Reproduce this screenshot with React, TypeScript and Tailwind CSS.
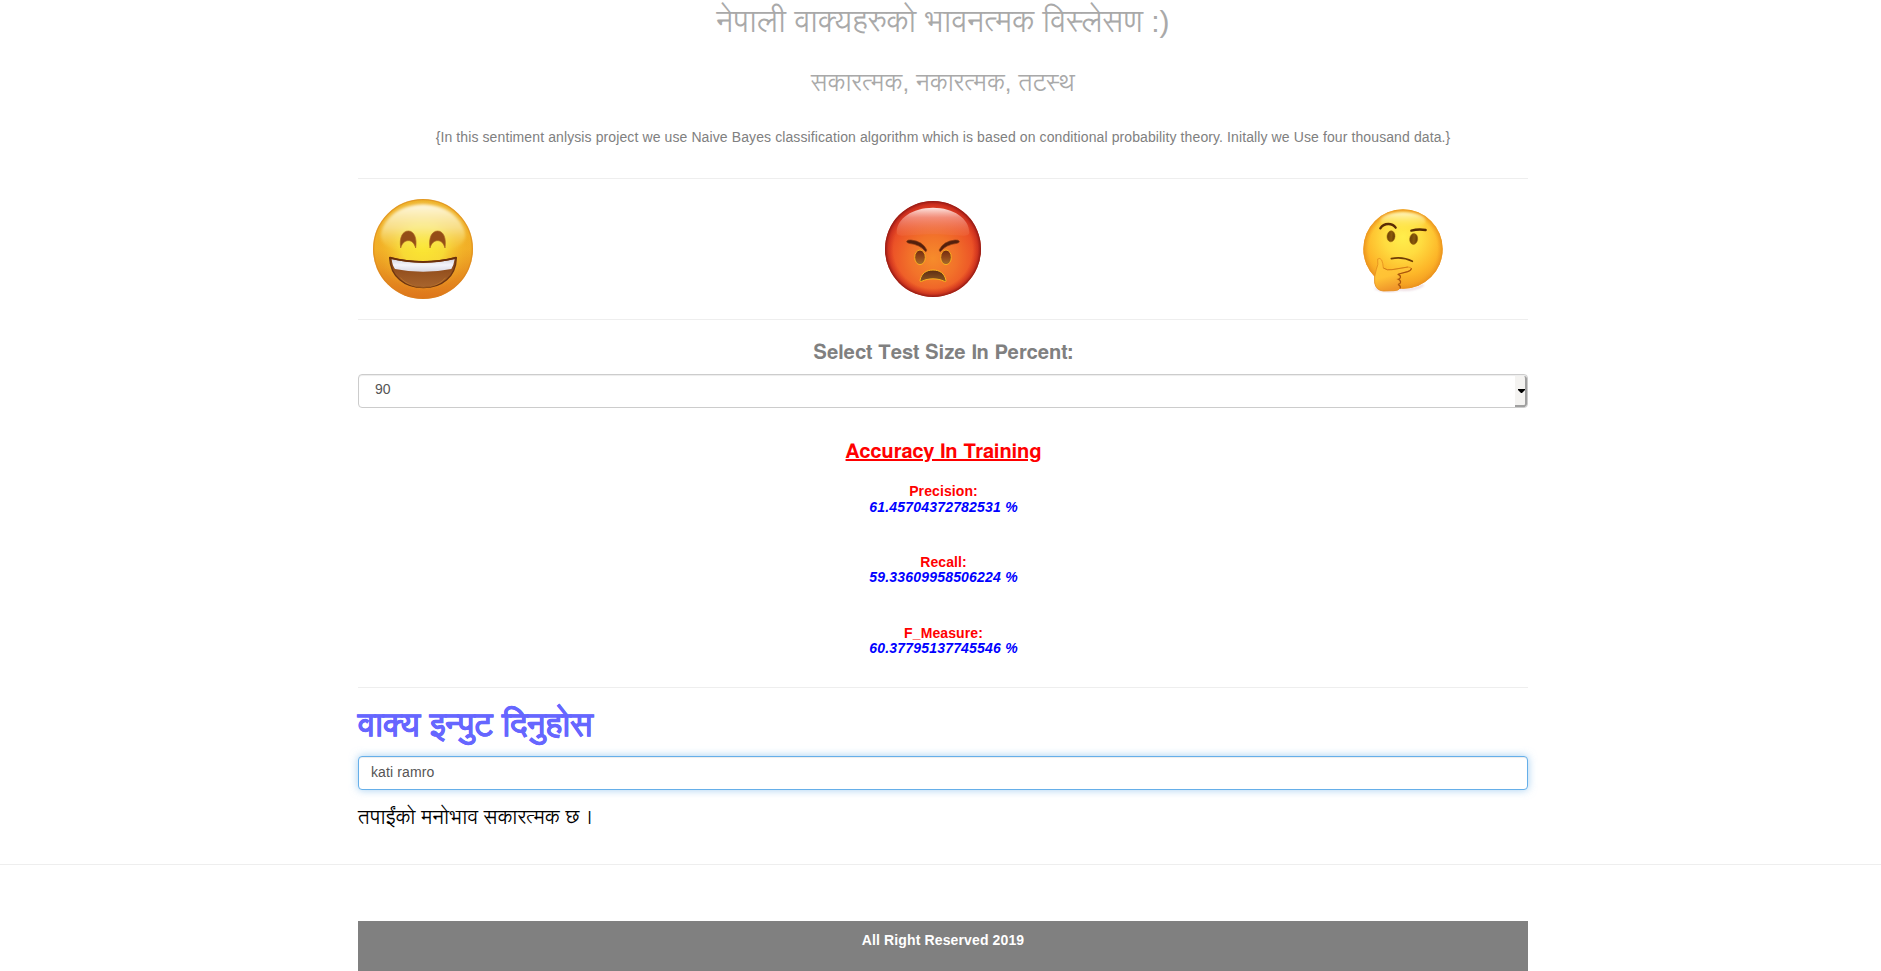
const metrics = [
  { label: 'Precision:', value: '61.45704372782531 %', leading: 'leading-[16px]' },
  { label: 'Recall:', value: '59.33609958506224 %', leading: 'leading-[14px]' },
  { label: 'F_Measure:', value: '60.37795137745546 %', leading: 'leading-[14px]' },
];

function HappyFace() {
  return (
    <svg className="mt-[19px] ml-[14px] h-[102px] w-[102px] shrink-0" viewBox="66 54 306 306">
      <defs>
        <linearGradient id="happy-base" x1="0" y1="0" x2="0" y2="1">
          <stop offset="0" stopColor="#eeb52b" />
          <stop offset="0.5" stopColor="#f1ae26" />
          <stop offset="1" stopColor="#dd741b" />
        </linearGradient>
        <radialGradient id="happy-glow" cx="0.5" cy="0.5" r="0.5">
          <stop offset="0" stopColor="#fbe832" />
          <stop offset="0.45" stopColor="#f8dc36" stopOpacity="0.95" />
          <stop offset="1" stopColor="#f3ad28" stopOpacity="0" />
        </radialGradient>
        <linearGradient id="happy-shine" x1="0" y1="0" x2="0" y2="1">
          <stop offset="0" stopColor="#fffbe8" stopOpacity="0.95" />
          <stop offset="0.5" stopColor="#fbf2b5" stopOpacity="0.65" />
          <stop offset="1" stopColor="#f8e14a" stopOpacity="0" />
        </linearGradient>
        <linearGradient id="happy-mouth" x1="0" y1="0" x2="0" y2="1">
          <stop offset="0" stopColor="#7a3b10" />
          <stop offset="0.5" stopColor="#975320" />
          <stop offset="1" stopColor="#a8652e" />
        </linearGradient>
        <linearGradient id="happy-teeth" x1="0" y1="0" x2="0" y2="1">
          <stop offset="0" stopColor="#d6d6de" />
          <stop offset="0.45" stopColor="#f4f4fb" />
          <stop offset="1" stopColor="#d9d8e2" />
        </linearGradient>
        <filter id="happy-soft"><feGaussianBlur stdDeviation="4" /></filter>
      </defs>
      <circle cx="219" cy="207" r="150" fill="url(#happy-base)" />
      <circle cx="219" cy="207" r="148" fill="none" stroke="#d9821e" strokeWidth="4" opacity="0.55" />
      <ellipse cx="219" cy="196" rx="146" ry="138" fill="url(#happy-glow)" />
      <path d="M219 73C150 73 98 115 92 165C92 205 150 218 219 218C288 218 346 205 346 165C340 115 288 73 219 73Z" fill="url(#happy-shine)" filter="url(#happy-soft)" />
      <path d="M152 204C147 172 158 153 175 153C192 153 202 174 197 204C193 190 186 182 175 182C164 182 156 190 152 204Z" fill="#944d17" stroke="#ad6821" strokeWidth="2" />
      <path d="M240 204C235 172 246 153 263 153C280 153 290 174 285 204C281 190 274 182 263 182C252 182 244 190 240 204Z" fill="#944d17" stroke="#ad6821" strokeWidth="2" />
      <path d="M119 233Q219 257 319 233C318 290 276 323 220 323C164 323 121 290 119 233Z" fill="url(#happy-mouth)" stroke="#6e3510" strokeWidth="4" strokeLinejoin="round" />
      <path d="M125 238Q219 260 314 238Q311 257 304 267Q219 284 135 267Q127 257 125 238Z" fill="url(#happy-teeth)" />
      <path d="M120 233Q219 259 318 233" fill="none" stroke="#6b2e0b" strokeWidth="5" strokeLinecap="round" />
      <path d="M151 293C187 332 253 332 287 293" fill="none" stroke="#e9982c" strokeWidth="2" opacity="0.5" />
    </svg>
  );
}

function AngryFace() {
  return (
    <svg className="mt-[21px] ml-[410px] h-[98px] w-[98px] shrink-0" viewBox="72 60 294 294">
      <defs>
        <radialGradient id="angry-base" cx="0.5" cy="0.6" r="0.6">
          <stop offset="0" stopColor="#f68c2b" />
          <stop offset="0.4" stopColor="#f2722a" />
          <stop offset="0.7" stopColor="#ec5427" />
          <stop offset="1" stopColor="#d83421" />
        </radialGradient>
        <radialGradient id="angry-edge" cx="0.5" cy="0.5" r="0.5">
          <stop offset="0.82" stopColor="#d02c1c" stopOpacity="0" />
          <stop offset="0.93" stopColor="#c0261b" stopOpacity="0.6" />
          <stop offset="1" stopColor="#8e1813" />
        </radialGradient>
        <linearGradient id="angry-shine" x1="0" y1="0" x2="0" y2="1">
          <stop offset="0" stopColor="#fff1ee" stopOpacity="0.95" />
          <stop offset="0.35" stopColor="#f6a598" stopOpacity="0.72" />
          <stop offset="1" stopColor="#f27a50" stopOpacity="0.25" />
        </linearGradient>
        <linearGradient id="angry-eye" x1="0" y1="0" x2="0" y2="1">
          <stop offset="0" stopColor="#71290f" />
          <stop offset="0.5" stopColor="#914719" />
          <stop offset="1" stopColor="#a86f2b" />
        </linearGradient>
        <linearGradient id="angry-mouth" x1="0" y1="0" x2="0" y2="1">
          <stop offset="0" stopColor="#5c2c12" />
          <stop offset="1" stopColor="#8b5822" />
        </linearGradient>
      </defs>
      <circle cx="219" cy="207" r="144" fill="url(#angry-base)" />
      <circle cx="219" cy="207" r="144" fill="url(#angry-edge)" />
      <path d="M219 83C158 83 110 116 110 157C111 175 140 164 219 163C298 164 327 175 328 157C328 116 280 83 219 83Z" fill="url(#angry-shine)" />
      <path d="M140 184Q143 179 153 180Q188 184 200 209Q201 214 197 215Q181 194 147 190Q139 188 140 184Z" fill="#54200d" stroke="#8a3a12" strokeWidth="2" />
      <path d="M298 184Q295 179 285 180Q250 184 238 209Q237 214 241 215Q257 194 291 190Q299 188 298 184Z" fill="#54200d" stroke="#8a3a12" strokeWidth="2" />
      <ellipse cx="180" cy="232" rx="16" ry="22" fill="url(#angry-eye)" stroke="#faae21" strokeWidth="3" />
      <ellipse cx="258" cy="232" rx="16" ry="22" fill="url(#angry-eye)" stroke="#faae21" strokeWidth="3" />
      <path d="M180 301C184 280 199 270 219 270C239 270 254 280 258 301Q258 307 253 304C233 294 205 294 185 304Q180 307 180 301Z" fill="url(#angry-mouth)" stroke="#fab51e" strokeWidth="3" />
    </svg>
  );
}

function ThinkingFace() {
  return (
    <svg className="mt-[29px] ml-[380px] h-[86px] w-[82px] shrink-0" viewBox="66 84 246 258">
      <defs>
        <radialGradient id="think-base" cx="0.5" cy="0.35" r="0.68">
          <stop offset="0" stopColor="#ffee4c" />
          <stop offset="0.35" stopColor="#ffdc40" />
          <stop offset="0.7" stopColor="#fdb729" />
          <stop offset="1" stopColor="#f0931e" />
        </radialGradient>
        <radialGradient id="think-edge" cx="0.5" cy="0.5" r="0.5">
          <stop offset="0.86" stopColor="#f5a623" stopOpacity="0" />
          <stop offset="1" stopColor="#e88e1c" stopOpacity="0.9" />
        </radialGradient>
        <linearGradient id="think-shine" x1="0" y1="0" x2="0" y2="1">
          <stop offset="0" stopColor="#fffde0" stopOpacity="0.85" />
          <stop offset="1" stopColor="#fff25a" stopOpacity="0" />
        </linearGradient>
        <linearGradient id="think-hand" x1="0" y1="0" x2="0.3" y2="1">
          <stop offset="0" stopColor="#ffc739" />
          <stop offset="0.6" stopColor="#ffc235" />
          <stop offset="1" stopColor="#f0962a" />
        </linearGradient>
        <linearGradient id="think-eye" x1="0" y1="0" x2="1" y2="0">
          <stop offset="0" stopColor="#6b3f05" />
          <stop offset="0.55" stopColor="#8a5a0b" />
          <stop offset="1" stopColor="#643a04" />
        </linearGradient>
        <filter id="think-shadow" x="-20%" y="-20%" width="140%" height="140%">
          <feGaussianBlur stdDeviation="3" />
        </filter>
      </defs>
      <path d="M106 325Q140 342 181 328Q220 333 250 315" fill="none" stroke="#c9a0b0" strokeWidth="5" opacity="0.5" filter="url(#think-shadow)" />
      <circle cx="189" cy="207" r="119" fill="url(#think-base)" />
      <circle cx="189" cy="207" r="119" fill="url(#think-edge)" />
      <ellipse cx="189" cy="122" rx="68" ry="25" fill="url(#think-shine)" filter="url(#think-shadow)" />
      <path d="M121 145Q129 132 145 132Q159 132 167 143" fill="none" stroke="#5a2c04" strokeWidth="7" strokeLinecap="round" />
      <path d="M214 152Q235 146 257 150" fill="none" stroke="#5a2c04" strokeWidth="7" strokeLinecap="round" />
      <ellipse cx="153" cy="169" rx="12" ry="16.5" fill="url(#think-eye)" stroke="#97600c" strokeWidth="1.5" transform="rotate(5 153 169)" />
      <ellipse cx="221" cy="177" rx="12" ry="16.5" fill="url(#think-eye)" stroke="#97600c" strokeWidth="1.5" transform="rotate(5 221 177)" />
      <path d="M154 236Q188 229 217 244" fill="none" stroke="#6f3d06" strokeWidth="5" strokeLinecap="round" />
      <path d="M113 237Q120 232 125 240Q129 250 130 264Q141 272 156 269L204 261Q214 261 214 267Q213 272 203 275L175 283Q183 286 182 292Q180 297 175 298Q183 302 181 308Q179 313 174 313Q183 316 181 323Q177 332 162 332L130 333Q108 331 104 309Q101 292 109 268Q116 254 113 237Z" fill="url(#think-hand)" stroke="#e58e1d" strokeWidth="2.5" />
      <path d="M176 282L203 275Q213 272 214 266M174 283Q183 286 181 293Q180 297 175 298Q184 302 181 309Q179 313 174 313Q182 316 181 324" fill="none" stroke="#a9540c" strokeWidth="3.5" strokeLinecap="round" />
      <path d="M130 264Q141 272 156 269L204 261" fill="none" stroke="#c96f12" strokeWidth="2.5" opacity="0.8" />
    </svg>
  );
}

export default function App() {
  return (
    <div className="h-[971px] overflow-hidden bg-white font-['Liberation_Sans',sans-serif] text-sm leading-5 text-[#333333]">
      <main className="ml-[358px] w-[1170px]">
        <header className="text-center">
          <h1 className="h-[60px] pt-[5px] font-['Liberation_Sans','Lohit_Devanagari',sans-serif] text-[30px] leading-[33px] tracking-[-0.05px] text-[#a9a9a9]">
            नेपाली वाक्यहरुको भावनत्मक विस्लेसण :)
          </h1>
          <h2 className="h-[67px] pt-[10px] font-['Liberation_Sans','Lohit_Devanagari',sans-serif] text-[24px] leading-[26px] tracking-[0.16px] text-[#a9a9a9]">
            सकारत्मक, नकारत्मक, तटस्थ
          </h2>
          <p className="h-[51px] tracking-[0.105px] whitespace-nowrap text-[#808080]">
            {'{In this sentiment anlysis project we use Naive Bayes classification algorithm which is based on conditional probability theory. Initally we Use four thousand data.}'}
          </p>
        </header>

        <section className="flex h-[142px] items-start border-y border-[#eeeeee]">
          <HappyFace />
          <AngryFace />
          <ThinkingFace />
        </section>

        <section className="text-center">
          <h3 className="h-[54px] pt-[22px] font-['FreeSans','Liberation_Sans',sans-serif] text-[20px] leading-[22px] font-bold text-[#808080]">
            Select Test Size In Percent:
          </h3>
          <div className="flex h-[34px] justify-between overflow-hidden rounded border border-[#cccccc] bg-white text-left text-[#555555] shadow-[inset_0_1px_1px_rgba(0,0,0,0.075)]">
            <span className="pt-[4px] pl-4">90</span>
            <span className="mt-px flex w-3 items-center justify-end rounded-r-[3px] border-r-2 border-b-2 border-[#a0a0a0] bg-[#f4f3f1]">
              <svg className="h-1 w-[7px]" viewBox="0 0 7 4">
                <path d="M0 0H7V1L4 4H3L0 1Z" fill="#000000" />
              </svg>
            </span>
          </div>

          <h3 className="mt-[33px] h-[42px] pl-px font-['FreeSans','Liberation_Sans',sans-serif] text-[20px] leading-[22px] font-bold tracking-[0.05px] text-[#ff0000] underline">
            Accuracy In Training
          </h3>
          <div className="h-[204px] pl-px font-bold">
            {metrics.map((metric) => (
              <div key={metric.label} className="h-[71px] leading-4">
                <p className="tracking-[0.1px] text-[#ff0000]">{metric.label}</p>
                <p className={`tracking-[0.2px] text-[#0000ff] italic ${metric.leading}`}>{metric.value}</p>
              </div>
            ))}
          </div>
        </section>

        <section className="border-t border-[#eeeeee]">
          <label className="block h-[68px] pt-[19px] font-['Lohit_Devanagari',sans-serif] text-[32px] leading-[40px] font-bold text-[#6666ff] [-webkit-text-stroke:0.4px]">
            वाक्य इन्पुट दिनुहोस
          </label>
          <input
            type="text"
            defaultValue="kati ramro"
            className="block h-[34px] w-full rounded border border-[#66afe9] bg-white px-3 pb-[2px] text-sm tracking-[0.12px] text-[#555555] shadow-[inset_0_1px_1px_rgba(0,0,0,0.075),0_0_8px_rgba(102,175,233,0.6)] outline-none"
          />
          <p className="h-[74px] pt-[14px] font-['Liberation_Sans','Lohit_Devanagari',sans-serif] text-[20px] leading-[26px] tracking-[0.08px] text-black">तपाईंको मनोभाव सकारत्मक छ ।</p>
        </section>
      </main>

      <hr className="border-[#eeeeee]" />

      <footer className="mt-14 ml-[358px] h-[50px] w-[1170px] bg-[#808080] pt-[9px] text-center font-bold tracking-[0.13px] text-white">
        All Right Reserved 2019
      </footer>
    </div>
  );
}
